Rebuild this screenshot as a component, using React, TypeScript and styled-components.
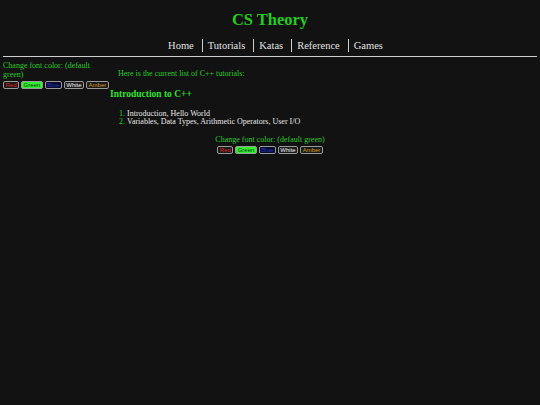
import React from 'react';
import styled, { createGlobalStyle } from 'styled-components';

const GlobalStyle = createGlobalStyle`
  html, body {
    margin: 0;
    padding: 0;
    background: #121212;
  }
  body {
    font-family: "Liberation Serif", "Times New Roman", serif;
    color: #2ec92e;
  }
`;

const Page = styled.div`
  min-height: 405px;
  padding: 0 3px;
  box-sizing: border-box;
`;

const Title = styled.h1`
  margin: 0;
  padding-top: 10px;
  text-align: center;
  font-size: 16.5px;
  line-height: 20px;
  color: #22cc22;
`;

const Nav = styled.nav`
  display: flex;
  justify-content: center;
  margin-top: 9px;
  padding: 0 0 4px 14px;
  border-bottom: 1px solid #cfcfcf;
`;

const NavLink = styled.a<{ $first?: boolean }>`
  font-size: 10.5px;
  line-height: 13px;
  color: #e0e0e0;
  padding: 0 8px 0 5px;
  border-left: ${(p) => (p.$first ? 'none' : '1px solid #cfcfcf')};
  text-decoration: none;
`;

const Row = styled.div`
  display: flex;
  margin-top: 4px;
`;

const Sidebar = styled.aside`
  width: 106px;
  flex-shrink: 0;
  font-size: 8px;
  line-height: 9px;
  color: #2ec92e;
`;

const Main = styled.main`
  flex: 1;
  padding-left: 1px;
`;

const Intro = styled.p`
  margin: 8px 0 0 8px;
  font-size: 8px;
  line-height: 10px;
`;

const Heading = styled.h2`
  margin: 9px 0 0 0;
  font-size: 9.5px;
  line-height: 12px;
  color: #33e033;
`;

const List = styled.ol`
  margin: 10px 0 0 0;
  padding-left: 17px;
  font-size: 8px;
  line-height: 8px;
  color: #e8e8e8;

  li::marker {
    color: #2ec92e;
  }
`;

const Footer = styled.div`
  margin-top: 9px;
  text-align: center;
  font-size: 8px;
  line-height: 9px;
`;

const Swatches = styled.div<{ $center?: boolean }>`
  display: flex;
  gap: 2px;
  margin-top: 2px;
  justify-content: ${(p) => (p.$center ? 'center' : 'flex-start')};
`;

const Swatch = styled.button<{ $fg: string; $bg: string }>`
  font-family: "Liberation Sans", Arial, sans-serif;
  font-size: 6px;
  line-height: 6px;
  padding: 0 1.5px;
  height: 8px;
  border: 1px solid #9a9a9a;
  border-radius: 2px;
  background: ${(p) => p.$bg};
  color: ${(p) => p.$fg};
  cursor: pointer;
`;

const colors = [
  { label: 'Red', fg: '#dd2222', bg: '#1a1a1a' },
  { label: 'Green', fg: '#0a3a0a', bg: '#33ee33' },
  { label: 'Blue', fg: '#2233bb', bg: '#0a0a2a' },
  { label: 'White', fg: '#f0f0f0', bg: '#1a1a1a' },
  { label: 'Amber', fg: '#d49a1a', bg: '#1a1a1a' },
];

const ColorPicker: React.FC<{ center?: boolean }> = ({ center }) => (
  <Swatches $center={center}>
    {colors.map((c) => (
      <Swatch key={c.label} $fg={c.fg} $bg={c.bg}>
        {c.label}
      </Swatch>
    ))}
  </Swatches>
);

const links = ['Home', 'Tutorials', 'Katas', 'Reference', 'Games'];

const App: React.FC = () => (
  <Page>
    <GlobalStyle />
    <Title>CS Theory</Title>
    <Nav>
      {links.map((l, i) => (
        <NavLink key={l} href="#" $first={i === 0}>
          {l}
        </NavLink>
      ))}
    </Nav>
    <Row>
      <Sidebar>
        Change font color: (default green)
        <ColorPicker />
      </Sidebar>
      <Main>
        <Intro>Here is the current list of C++ tutorials:</Intro>
        <Heading>Introduction to C++</Heading>
        <List>
          <li>Introduction, Hello World</li>
          <li>Variables, Data Types, Arithmetic Operators, User I/O</li>
        </List>
      </Main>
    </Row>
    <Footer>
      Change font color: (default green)
      <ColorPicker center />
    </Footer>
  </Page>
);

export default App;
